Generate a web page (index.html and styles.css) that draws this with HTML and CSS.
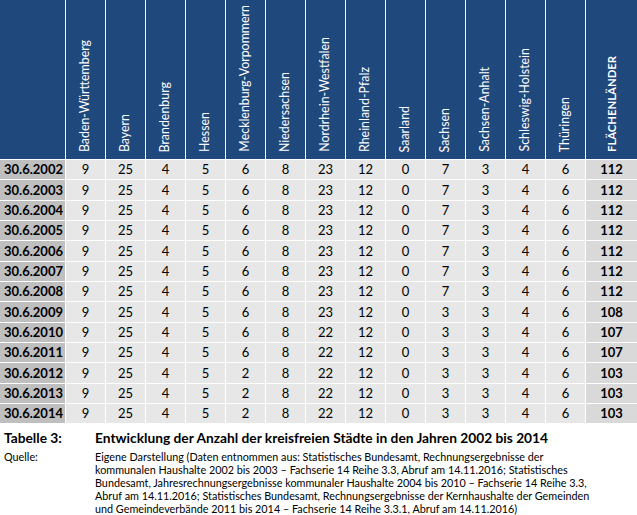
FILE: index.html
```html
<!DOCTYPE html>
<html lang="de">
<head>
<meta charset="utf-8">
<title>Tabelle 3</title>
<link rel="stylesheet" href="styles.css">
</head>
<body>
<div class="tbl">
  <div class="h corner"></div>
  <div class="h"><span>Baden-Württemberg</span></div>
  <div class="h"><span>Bayern</span></div>
  <div class="h"><span>Brandenburg</span></div>
  <div class="h"><span>Hessen</span></div>
  <div class="h"><span>Mecklenburg-Vorpommern</span></div>
  <div class="h"><span>Niedersachsen</span></div>
  <div class="h"><span>Nordrhein-Westfalen</span></div>
  <div class="h"><span>Rheinland-Pfalz</span></div>
  <div class="h"><span>Saarland</span></div>
  <div class="h"><span>Sachsen</span></div>
  <div class="h"><span>Sachsen-Anhalt</span></div>
  <div class="h"><span>Schleswig-Holstein</span></div>
  <div class="h"><span>Thüringen</span></div>
  <div class="h tot"><span>FLÄCHENLÄNDER</span></div>

  <div class="d">30.6.2002</div><div>9</div><div>25</div><div>4</div><div>5</div><div>6</div><div>8</div><div>23</div><div>12</div><div>0</div><div>7</div><div>3</div><div>4</div><div>6</div><div class="t">112</div>
  <div class="d">30.6.2003</div><div>9</div><div>25</div><div>4</div><div>5</div><div>6</div><div>8</div><div>23</div><div>12</div><div>0</div><div>7</div><div>3</div><div>4</div><div>6</div><div class="t">112</div>
  <div class="d">30.6.2004</div><div>9</div><div>25</div><div>4</div><div>5</div><div>6</div><div>8</div><div>23</div><div>12</div><div>0</div><div>7</div><div>3</div><div>4</div><div>6</div><div class="t">112</div>
  <div class="d">30.6.2005</div><div>9</div><div>25</div><div>4</div><div>5</div><div>6</div><div>8</div><div>23</div><div>12</div><div>0</div><div>7</div><div>3</div><div>4</div><div>6</div><div class="t">112</div>
  <div class="d">30.6.2006</div><div>9</div><div>25</div><div>4</div><div>5</div><div>6</div><div>8</div><div>23</div><div>12</div><div>0</div><div>7</div><div>3</div><div>4</div><div>6</div><div class="t">112</div>
  <div class="d">30.6.2007</div><div>9</div><div>25</div><div>4</div><div>5</div><div>6</div><div>8</div><div>23</div><div>12</div><div>0</div><div>7</div><div>3</div><div>4</div><div>6</div><div class="t">112</div>
  <div class="d">30.6.2008</div><div>9</div><div>25</div><div>4</div><div>5</div><div>6</div><div>8</div><div>23</div><div>12</div><div>0</div><div>7</div><div>3</div><div>4</div><div>6</div><div class="t">112</div>
  <div class="d">30.6.2009</div><div>9</div><div>25</div><div>4</div><div>5</div><div>6</div><div>8</div><div>23</div><div>12</div><div>0</div><div>3</div><div>3</div><div>4</div><div>6</div><div class="t">108</div>
  <div class="d">30.6.2010</div><div>9</div><div>25</div><div>4</div><div>5</div><div>6</div><div>8</div><div>22</div><div>12</div><div>0</div><div>3</div><div>3</div><div>4</div><div>6</div><div class="t">107</div>
  <div class="d">30.6.2011</div><div>9</div><div>25</div><div>4</div><div>5</div><div>6</div><div>8</div><div>22</div><div>12</div><div>0</div><div>3</div><div>3</div><div>4</div><div>6</div><div class="t">107</div>
  <div class="d">30.6.2012</div><div>9</div><div>25</div><div>4</div><div>5</div><div>2</div><div>8</div><div>22</div><div>12</div><div>0</div><div>3</div><div>3</div><div>4</div><div>6</div><div class="t">103</div>
  <div class="d">30.6.2013</div><div>9</div><div>25</div><div>4</div><div>5</div><div>2</div><div>8</div><div>22</div><div>12</div><div>0</div><div>3</div><div>3</div><div>4</div><div>6</div><div class="t">103</div>
  <div class="d">30.6.2014</div><div>9</div><div>25</div><div>4</div><div>5</div><div>2</div><div>8</div><div>22</div><div>12</div><div>0</div><div>3</div><div>3</div><div>4</div><div>6</div><div class="t">103</div>
</div>
<div class="cap">
  <div class="lab b">Tabelle 3:</div>
  <div class="title b">Entwicklung der Anzahl der kreisfreien Städte in den Jahren 2002 bis 2014</div>
  <div class="lab">Quelle:</div>
  <div class="src">Eigene Darstellung (Daten entnommen aus: Statistisches Bundesamt, Rechnungsergebnisse der<br>kommunalen Haushalte 2002 bis 2003 – Fachserie 14 Reihe 3.3, Abruf am 14.11.2016; Statistisches<br>Bundesamt, Jahresrechnungsergebnisse kommunaler Haushalte 2004 bis 2010 – Fachserie 14 Reihe 3.3,<br>Abruf am 14.11.2016; Statistisches Bundesamt, Rechnungsergebnisse der Kernhaushalte der Gemeinden<br>und Gemeindeverbände 2011 bis 2014 – Fachserie 14 Reihe 3.3.1, Abruf am 14.11.2016)</div>
</div>
</body>
</html>
```
FILE: styles.css
```css
html, body {
  margin: 0;
  padding: 0;
  background: #fff;
}
body {
  font-family: Lato, "Open Sans", sans-serif;
  color: #000;
  width: 637px;
}
.tbl {
  display: grid;
  grid-template-columns: 65px repeat(13, 39px) 51px;
  grid-template-rows: 159px repeat(13, 19.35px);
  gap: 1px;
  background: #fff;
  font-size: 13px;
}
.tbl > div {
  background: #e7e7e7;
  display: flex;
  align-items: center;
  justify-content: center;
  line-height: 1;
}
.tbl > .h {
  background: #1f497d;
  color: #fff;
  align-items: flex-end;
  padding-bottom: 7px;
  box-sizing: border-box;
  font-size: 12.4px;
}
.h span {
  writing-mode: vertical-rl;
  transform: rotate(180deg);
  white-space: nowrap;
}
.tbl > .h.tot { font-size: 11.3px; }
.h.tot span { font-weight: 700; }
.tbl > .d {
  background: #bfbfbf;
  font-weight: 700;
  justify-content: flex-start;
  padding-left: 4px;
}
.tbl > .t {
  background: #d9d9d9;
  font-weight: 700;
}
.cap {
  display: grid;
  grid-template-columns: 91px 1fr;
  padding: 7px 0 0 4px;
}
.b { font-weight: 700; }
.lab.b, .title { font-size: 13.75px; line-height: 16px; }
.lab { font-size: 10.8px; line-height: 13px; }
.title { padding-bottom: 4px; }
.src { font-size: 10.8px; line-height: 13px; }
```
